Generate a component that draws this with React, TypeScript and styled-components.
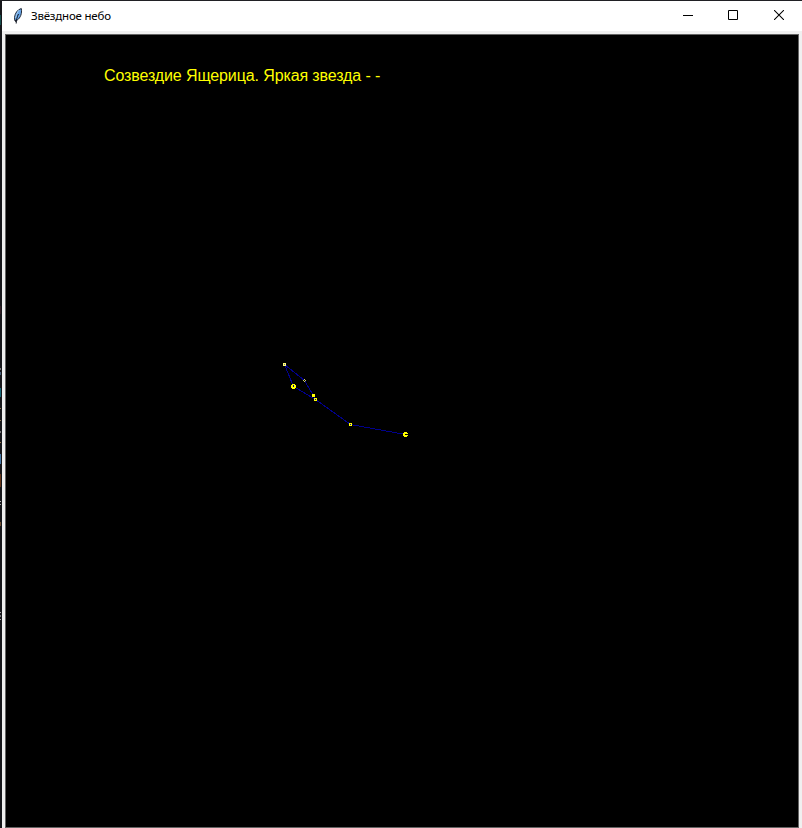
import React from 'react';
import styled, { createGlobalStyle } from 'styled-components';

const GlobalStyle = createGlobalStyle`
  * { box-sizing: border-box; }
  body { margin: 0; overflow: hidden; background: #17181c; }
`;

const Desktop = styled.main`
  display: grid;
  grid-template-columns: 2px 1fr;
  grid-template-rows: 1px 827px;
  width: 802px;
  height: 828px;
  background: #1c1c20;
`;

const TopEdge = styled.div`
  grid-column: 1 / -1;
  background: #202024;
`;

const DesktopEdge = styled.svg`
  display: block;
  width: 2px;
  height: 827px;
`;

const Window = styled.section`
  display: flex;
  flex-direction: column;
  min-width: 0;
  background: #f0f0f0;
`;

const TitleBar = styled.header`
  display: flex;
  align-items: center;
  height: 30px;
  padding-left: 10px;
  background: #fff;
`;

const Feather = styled.svg`
  display: block;
  width: 12px;
  height: 18px;
`;

const Title = styled.h1`
  margin: 0 auto 0 7px;
  font: 400 11.5px/16px 'Noto Sans', 'Open Sans', sans-serif;
  letter-spacing: -0.2px;
  color: #000;
  white-space: nowrap;
`;

const WindowButton = styled.button<{ $width: number }>`
  display: flex;
  align-items: center;
  justify-content: center;
  width: ${({ $width }) => $width}px;
  height: 30px;
  padding: 0 0 2px;
  border: 0;
  background: transparent;
`;

const ButtonIcon = styled.svg`
  display: block;
  width: 10px;
  height: 10px;
`;

const SkyFrame = styled.div`
  display: flex;
  flex-direction: column;
  width: 794px;
  height: 794px;
  margin: 3px 0 0 3px;
  border: 1px solid #646464;
  background: #000;
`;

const Caption = styled.p`
  height: 20px;
  margin: 31px 0 0 98px;
  font: 16px/20px 'Liberation Sans', Arial, sans-serif;
  letter-spacing: -0.11px;
  color: #ff0;
  white-space: nowrap;
`;

const Sky = styled.svg`
  display: block;
  flex: none;
  width: 792px;
  height: 741px;
`;

type Dot = { x: number; y: number; size: number; core?: string };

const stars: Dot[] = [
  { x: 284, y: 364, size: 3, core: '#fff' },
  { x: 304, y: 380, size: 3, core: '#000' },
  { x: 293, y: 386, size: 5 },
  { x: 313, y: 395, size: 3 },
  { x: 315, y: 399, size: 3, core: '#0000a0' },
  { x: 350, y: 424, size: 3, core: '#00a' },
  { x: 405, y: 434, size: 5 },
];

function Star({ x, y, size, core }: Dot) {
  if (size === 5) {
    return (
      <g transform={`translate(${x} ${y})`}>
        <path fill="#ff0" d="M-1-2h3v1h1v3h-1v1h-3v-1h-1v-3h1z" />
        {x === 293
          ? <path fill="#00008b" d="M0-1h1v2h-1z" />
          : <path fill="#000" d="M0 0h3v1h-3z" />}
      </g>
    );
  }
  return (
    <g transform={`translate(${x} ${y})`}>
      {core === '#000'
        ? <path fill="#d4d45d" d="M0-1h1v1h1v1h-1v1h-1v-1h-1v-1h1z" />
        : <path fill={core === '#fff' ? '#ffff70' : '#ff0'} d="M-1-1h3v3h-3z" />}
      {core && <path fill={core === '#fff' ? '#6060c0' : core} d="M0 0h1v1h-1z" />}
    </g>
  );
}

const edgeMarks: [number, number, string][] = [
  [15, 10, '#164f4d'], [306, 8, '#321e25'], [368, 2, '#777'],
  [372, 3, '#48617b'], [388, 9, '#176a79'], [408, 1, '#8e7751'],
  [420, 1, '#907954'], [431, 2, '#777'], [442, 1, '#9b7950'],
  [454, 10, '#4579a8'], [474, 13, '#673719'], [501, 1, '#bbb'],
  [504, 1, '#aaa'], [522, 4, '#715031'], [612, 1, '#aaa'],
  [615, 2, '#77777b'], [619, 1, '#aaa'],
];

export default function App() {
  return (
    <>
      <GlobalStyle />
      <Desktop>
        <TopEdge />
        <DesktopEdge viewBox="0 1 2 827" shapeRendering="crispEdges" aria-hidden="true">
          <path fill="#16171b" d="M0 1h2v827H0z" />
          {edgeMarks.map(([y, h, color]) => (
            <path key={y} fill={color} d={`M0 ${y}h1v${h}H0z`} />
          ))}
        </DesktopEdge>
        <Window>
          <TitleBar>
            <Feather viewBox="0 0 12 18" aria-hidden="true">
              <path fill="#67a5e8" stroke="#252b36" strokeWidth="1" d="M9.3 1.5C5.4 2.6 3 6.2 2.5 10.5l.3 2.9 2.3-.2C8.5 10.9 10.2 6.3 9.3 1.5z" />
              <path fill="none" stroke="#b9daf7" strokeWidth=".8" d="M7.2 3C5.2 5.2 4.3 7.8 3.8 11" />
              <path fill="none" stroke="#111722" strokeWidth="1" d="M6.5 7C5 10 4.2 13 4.2 16.5M3 13l1 2" />
            </Feather>
            <Title>Звёздное небо</Title>
            <WindowButton $width={45} aria-label="Свернуть">
              <ButtonIcon viewBox="0 0 10 10" shapeRendering="crispEdges">
                <path d="M0 5h10v1H0z" />
              </ButtonIcon>
            </WindowButton>
            <WindowButton $width={46} aria-label="Развернуть">
              <ButtonIcon viewBox="0 0 10 10">
                <path fill="none" stroke="#000" d="M.5.5h9v9h-9z" />
              </ButtonIcon>
            </WindowButton>
            <WindowButton $width={46} aria-label="Закрыть">
              <ButtonIcon viewBox="0 0 10 10">
                <path fill="none" stroke="#000" strokeWidth="1.05" d="M0 0l10 10M10 0L0 10" />
              </ButtonIcon>
            </WindowButton>
          </TitleBar>
          <SkyFrame>
            <Caption>Созвездие Ящерица. Яркая звезда - -</Caption>
            <Sky viewBox="6 86 792 741" shapeRendering="crispEdges" role="img" aria-label="Ящерица">
              <path fill="none" stroke="#00008b" d="M284.5 364.5L304.5 380.5L313.5 395.5L315.5 399.5M284.5 364.5L293.5 386.5L315.5 399.5L350.5 424.5L405.5 434.5" />
              {stars.map((star) => <Star key={`${star.x}-${star.y}`} {...star} />)}
            </Sky>
          </SkyFrame>
        </Window>
      </Desktop>
    </>
  );
}
